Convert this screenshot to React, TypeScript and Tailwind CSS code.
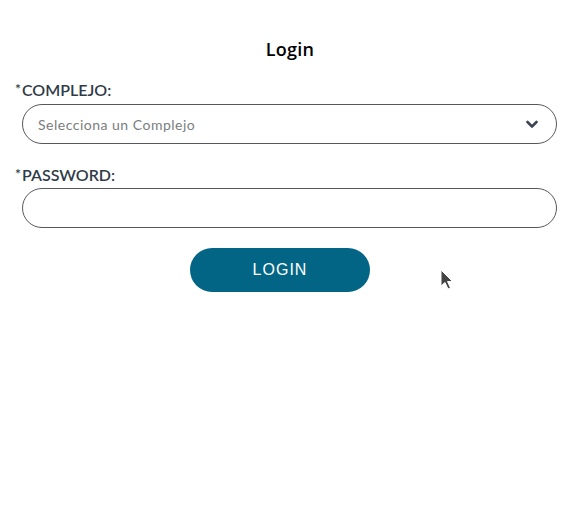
import React from 'react';

export default function App() {
  return (
    <div className="relative w-[566px] h-[530px] bg-white font-['Lato',sans-serif]">
      <div className="pt-[38px] pl-[22px] pr-[9px]">
        {/* Title */}
        <h1 className="text-center text-[18px] leading-[22px] font-semibold text-black font-['Open_Sans',sans-serif] pl-[1px] tracking-[0.3px]">
          Login
        </h1>

        {/* Complejo */}
        <div className="mt-[21px]">
          <label className="flex items-start -ml-[7px] text-[16px] leading-[18px] font-semibold text-[#2f3b47] uppercase">
            <span className="text-[14px] leading-[14px] mr-[1px] mt-[1px]">*</span>
            COMPLEJO:
          </label>
          <div className="mt-[5px] flex items-center h-[40px] border border-[#55585c] rounded-full pl-[15px] pr-[18px]">
            <span className="flex-1 text-[14px] text-[#7a7d80] tracking-[0.5px]">Selecciona un Complejo</span>
            <svg width="12" height="9" viewBox="0 0 12 9" className="text-[#3b4654]">
              <path d="M1.5 2 L6 6.5 L10.5 2" fill="none" stroke="currentColor" strokeWidth="2.6" strokeLinecap="round" strokeLinejoin="round" />
            </svg>
          </div>
        </div>

        {/* Password */}
        <div className="mt-[22px]">
          <label className="flex items-start -ml-[7px] text-[16px] leading-[18px] font-semibold text-[#2f3b47] uppercase">
            <span className="text-[14px] leading-[14px] mr-[1px] mt-[1px]">*</span>
            PASSWORD:
          </label>
          <input
            type="password"
            className="mt-[4px] block w-full h-[40px] border border-[#55585c] rounded-full px-[15px] outline-none"
          />
        </div>

        {/* Button */}
        <div className="mt-[20px] pl-[168px]">
          <button className="w-[180px] h-[44px] rounded-full bg-[#036585] text-white text-[16px] tracking-[1px] font-['Liberation_Sans',sans-serif]">
            LOGIN
          </button>
        </div>
      </div>

      {/* mouse cursor */}
      <svg className="absolute left-[440px] top-[269px]" width="14" height="22" viewBox="0 0 14 22">
        <path d="M1 1 L1 17 L5 13.5 L8 20 L10.5 19 L7.5 12.5 L12.5 12.5 Z" fill="#444" stroke="#fff" strokeWidth="1" />
      </svg>
    </div>
  );
}
